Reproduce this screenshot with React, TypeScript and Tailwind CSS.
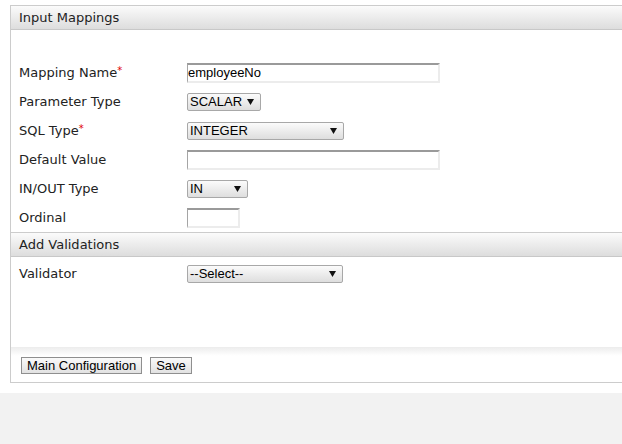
const labelFont = { fontFamily: '"DejaVu Sans", sans-serif' };

function Req() {
  return <span className="relative -top-[3px] text-[10px] text-[#e00000]">*</span>;
}

function TextBox({ width, value }: { width: string; value?: string }) {
  return (
    <div
      className={`${width} h-[20px] flex items-center bg-white border-t-2 border-l border-r-2 border-b-2 border-t-[#9a9a9a] border-l-[#a5a5a5] border-r-[#ececec] border-b-[#ececec] text-[13px] text-black font-['Liberation_Sans',Arial,sans-serif]`}
    >
      {value}
    </div>
  );
}

function SelectBox({ width, value }: { width: string; value: string }) {
  return (
    <div
      className={`${width} h-[18px] flex items-center justify-between pl-[2px] pr-[6px] rounded-[2px] border border-[#a8a8a8] bg-gradient-to-b from-[#fbfbfb] to-[#dedede] text-[13px] text-black font-['Liberation_Sans',Arial,sans-serif]`}
    >
      <span>{value}</span>
      <svg width="7" height="6" viewBox="0 0 7 6">
        <path d="M0 0 H7 L3.5 6 Z" fill="#111" />
      </svg>
    </div>
  );
}

function Row({ label, required, children }: { label: string; required?: boolean; children: React.ReactNode }) {
  return (
    <div className="flex items-center h-[29px]">
      <div className="w-[176px] shrink-0 pl-[8px] text-[13px] text-[#222]" style={labelFont}>
        {label}
        {required && <Req />}
      </div>
      {children}
    </div>
  );
}

function SectionHeader({ title }: { title: string }) {
  return (
    <div
      className="h-[24px] flex items-center pl-[8px] border-b border-[#c8c8c8] bg-gradient-to-b from-[#fbfbfb] to-[#dddddd] text-[13px] text-[#222]"
      style={labelFont}
    >
      {title}
    </div>
  );
}

function Button({ children }: { children: React.ReactNode }) {
  return (
    <button className="h-[17px] px-[5px] flex items-center border border-[#8f8f8f] bg-gradient-to-b from-[#fafafa] to-[#e2e2e2] text-[13px] text-black font-['Liberation_Sans',Arial,sans-serif] leading-none">
      {children}
    </button>
  );
}

export default function App() {
  return (
    <div className="w-[622px] h-[444px] overflow-hidden bg-white flex flex-col">
      <div className="pt-[5px] pl-[10px] pb-[10px] bg-white">
        <div className="w-[640px] border-t border-l border-b border-[#cccccc] bg-white">
          <SectionHeader title="Input Mappings" />
          <div className="pt-[28px]">
            <Row label="Mapping Name" required>
              <TextBox width="w-[253px]" value="employeeNo" />
            </Row>
            <Row label="Parameter Type">
              <SelectBox width="w-[74px]" value="SCALAR" />
            </Row>
            <Row label="SQL Type" required>
              <SelectBox width="w-[157px]" value="INTEGER" />
            </Row>
            <Row label="Default Value">
              <TextBox width="w-[253px]" />
            </Row>
            <Row label="IN/OUT Type">
              <SelectBox width="w-[61px]" value="IN" />
            </Row>
            <Row label="Ordinal">
              <TextBox width="w-[53px]" />
            </Row>
          </div>
          <div className="border-t border-[#cccccc]">
            <SectionHeader title="Add Validations" />
          </div>
          <div className="pt-[2px] h-[90px]">
            <Row label="Validator">
              <SelectBox width="w-[156px]" value="--Select--" />
            </Row>
          </div>
          <div className="h-[35px] bg-gradient-to-b from-[#ececec] via-white via-[25%] to-white flex items-center gap-[8px] pl-[10px] pt-[1px]">
            <Button>Main Configuration</Button>
            <Button>Save</Button>
          </div>
        </div>
      </div>
      <div className="flex-1 bg-[#f2f2f2]" />
    </div>
  );
}
